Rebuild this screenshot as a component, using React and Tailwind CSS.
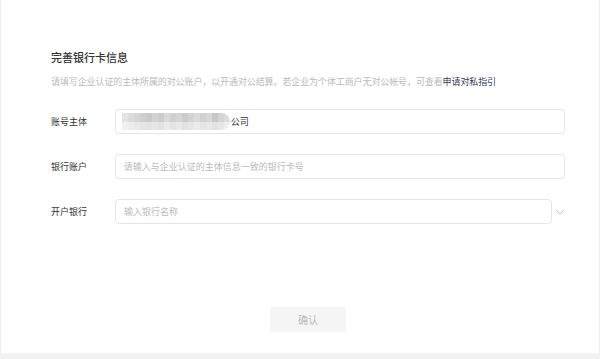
import React from "react";

const font = { fontFamily: '"Noto Sans CJK SC", "Noto Sans", sans-serif' };

// mosaic blocks used for the blurred company name
const topRow = [
  "bg-[#e4e4e4]", "bg-[#dcdcdc]", "bg-[#d6d6d6]", "bg-[#cfcfcf]", "bg-[#c9c9c9]",
  "bg-[#d2d2d2]", "bg-[#cdcdcd]", "bg-[#d9d9d9]", "bg-[#d0d0d0]", "bg-[#d5d5d5]",
  "bg-[#cbcbcb]", "bg-[#d3d3d3]", "bg-[#dadada]", "bg-[#d1d1d1]", "bg-[#d7d7d7]",
  "bg-[#c8c8c8]", "bg-[#d4d4d4]", "bg-[#dcdcdc]",
];
const bottomRow = [
  "bg-[#f0f0f0]", "bg-[#ececec]", "bg-[#e8e8e8]", "bg-[#e5e5e5]", "bg-[#e3e3e3]",
  "bg-[#e7e7e7]", "bg-[#e2e2e2]", "bg-[#eaeaea]", "bg-[#e4e4e4]", "bg-[#e9e9e9]",
  "bg-[#e1e1e1]", "bg-[#e6e6e6]", "bg-[#ebebeb]", "bg-[#e5e5e5]", "bg-[#e8e8e8]",
  "bg-[#e2e2e2]", "bg-[#e7e7e7]", "bg-[#eeeeee]",
];

const Row = ({ label, children }) => (
  <div className="flex items-center">
    <div className="w-[64px] text-[9px] text-[#333]">{label}</div>
    {children}
  </div>
);

export default function App() {
  return (
    <div style={font} className="w-[600px] h-[359px] bg-white flex flex-col overflow-hidden">
      <div className="flex-1 border-l border-r border-[#eeeeee] pl-[50px] pr-[34px] pt-[49px] flex flex-col">
        <h2 className="text-[11px] font-medium text-[#333] leading-[16px]">完善银行卡信息</h2>
        <p className="mt-[10px] text-[9px] leading-[13px] text-[#bbb] whitespace-nowrap tracking-[-0.1px]">
          请填写企业认证的主体所属的对公账户，以开通对公结算。若企业为个体工商户无对公帐号，可查看
          <span className="text-[#353c5e]">申请对私指引</span>
        </p>

        <div className="mt-[21px] flex flex-col gap-[20px]">
          <Row label="账号主体">
            <div className="w-[452px] h-[25px] border border-[#e6e6e6] rounded-[4px] flex items-center pl-[6px]">
              <div className="flex flex-col rounded-r-full overflow-hidden">
                <div className="flex">
                  {topRow.map((c, i) => (
                    <div key={i} className={`w-[6px] h-[9px] ${c}`} />
                  ))}
                </div>
                <div className="flex">
                  {bottomRow.map((c, i) => (
                    <div key={i} className={`w-[6px] h-[8px] ${c}`} />
                  ))}
                </div>
              </div>
              <span className="ml-[1px] text-[9px] text-[#333]">公司</span>
            </div>
          </Row>
          <Row label="银行账户">
            <div className="w-[452px] h-[25px] border border-[#e6e6e6] rounded-[4px] flex items-center pl-[8px] text-[9px] text-[#bbb]">
              请输入与企业认证的主体信息一致的银行卡号
            </div>
          </Row>
          <Row label="开户银行">
            <div className="w-[437px] h-[25px] border border-[#e6e6e6] rounded-[4px] flex items-center pl-[8px] text-[9px] text-[#bbb]">
              输入银行名称
            </div>
            <svg className="ml-[3px]" width="10" height="6" viewBox="0 0 10 6" fill="none">
              <path d="M1 1l4 4 4-4" stroke="#c4c4c4" strokeWidth="1" />
            </svg>
          </Row>
        </div>

        <div className="mt-auto mb-[21px] flex justify-center">
          <div className="w-[76px] h-[25px] rounded-[3px] bg-[#f5f5f5] flex items-center justify-center text-[10px] text-[#bbb]">
            确认
          </div>
        </div>
      </div>
      <div className="h-[6px] bg-[#f2f2f2]" />
    </div>
  );
}
